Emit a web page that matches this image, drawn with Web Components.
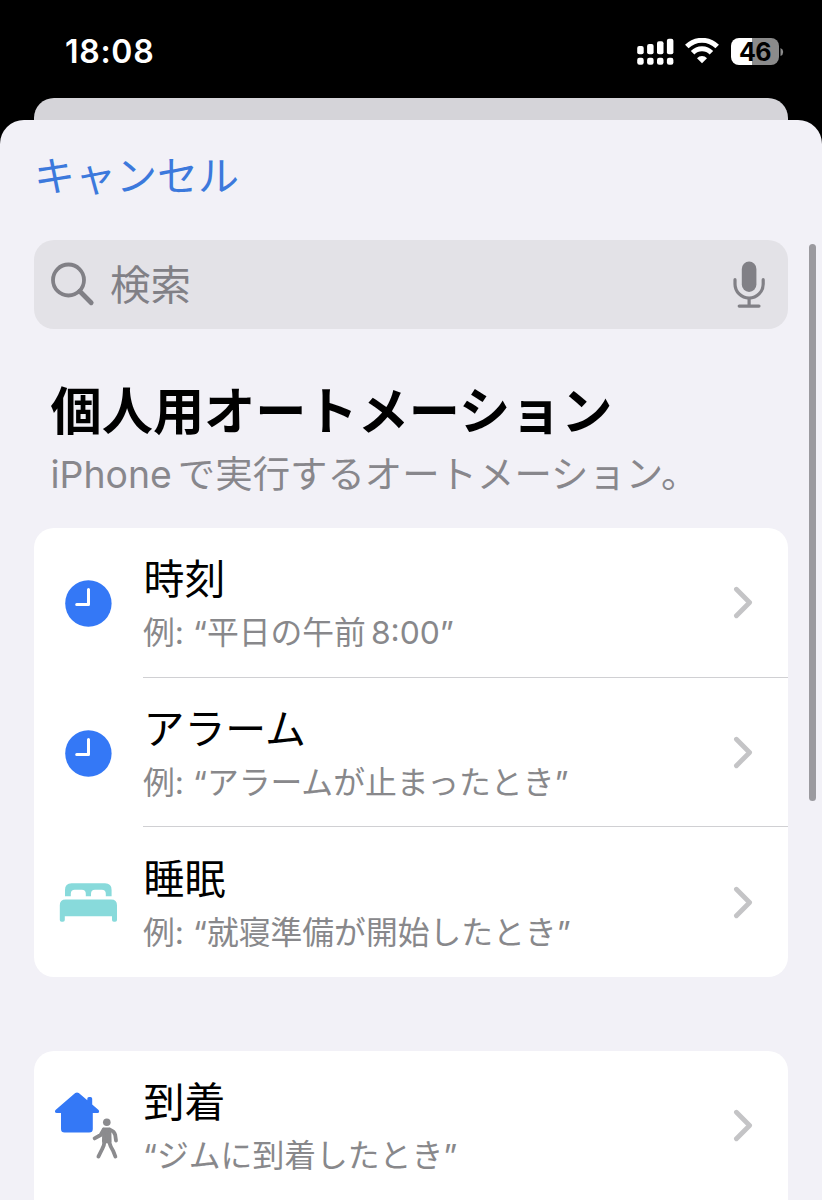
<!DOCTYPE html>
<html lang="ja">
<head>
<meta charset="utf-8">
<meta name="viewport" content="width=device-width, initial-scale=1">
<title>個人用オートメーション</title>
<style>
  body {
    margin: 0;
    height: 1200px;
    overflow: hidden;
    background: #000;
    font-family: Inter, "Noto Sans CJK JP", sans-serif;
  }
</style>
</head>
<body>
<status-bar time="18:08" battery="46"></status-bar>
<modal-sheet>
  <cancel-button>キャンセル</cancel-button>
  <search-field>検索</search-field>
  <section-heading>
    個人用オートメーション
    <span slot="detail"><span>iPhone</span><span style="margin-left: 6px">で実行するオートメーション。</span></span>
  </section-heading>
  <list-card>
    <trigger-row icon="clock">時刻<span slot="detail">例: “平日の午前<span style="margin-left: 5px">8:00</span>”</span></trigger-row>
    <trigger-row icon="clock">アラーム<span slot="detail">例: “アラームが止まったとき”</span></trigger-row>
    <trigger-row icon="bed">睡眠<span slot="detail">例: “就寝準備が開始したとき”</span></trigger-row>
  </list-card>
  <list-card style="padding-bottom: 60px">
    <trigger-row icon="arrive">到着<span slot="detail">“ジムに到着したとき”</span></trigger-row>
  </list-card>
</modal-sheet>

<script>
// All row icons share a 109x149 box, the width of the leading column.
const ICONS = {
  clock: `
    <circle cx="54.4" cy="75.5" r="23.2" fill="#3478f6"/>
    <path d="M54.5 61.5V76.4H42.7" fill="none" stroke="#fff" stroke-width="3" stroke-linecap="round" stroke-linejoin="round"/>`,
  bed: `
    <g fill="#88dadb" transform="translate(-0.2 0.7)">
      <path d="M31.2 68.6V62.2Q31.2 55.6 37.8 55.6H71.2Q77.8 55.6 77.8 62.2V68.6H72V66Q72 62 68 62H61.2Q57.2 62 57.2 66V68.6H52V66Q52 62 48 62H41Q37 62 37 66V68.6Z"/>
      <path d="M26 92.2V77.5Q26 71.7 31.8 71.7H77.4Q83.2 71.7 83.2 77.5V92.2Q83.2 94 81.4 94H80Q78.2 94 78.2 92.2V88.6H31V92.2Q31 94 29.2 94H27.8Q26 94 26 92.2Z"/>
    </g>`,
  arrive: `
    <path fill="#3478f6" d="M41.2 42Q43 40.8 44.8 42L53.3 49.3V47.7Q53.3 46 55 46H56.5Q58.2 46 58.2 47.7V53.4L64.3 58.7Q65.8 60 64.8 61.4Q64.3 62 63 62H58.8V78Q58.8 81.6 55.2 81.6H30.6Q27 81.6 27 78V62H22.8Q21.5 62 21.1 61.2Q20.4 59.8 21.8 58.7Z"/>
    <g fill="#8b8b8e" stroke="#8b8b8e" stroke-linecap="round" stroke-linejoin="round">
      <circle cx="72.8" cy="71.2" r="3.8" stroke="none"/>
      <path d="M70 78.4L75.5 78.4L75.8 90.5L69.8 90.5Z" stroke-width="3.6"/>
      <path fill="none" stroke-width="3.8" d="M69.6 78.6L66.6 84L60.6 87.4M76 78.8Q80.4 80.4 81.2 84L82 89.6M70.5 90.5Q70.2 94.5 68.2 98L64.4 105.6M75 90.5Q76.3 95.5 79.2 100L81.4 105.6"/>
    </g>`,
};

class StatusBar extends HTMLElement {
  constructor() {
    super();
    const shadow = this.attachShadow({ mode: 'open' });

    shadow.innerHTML = `
      <style>
        :host {
          display: flex;
          justify-content: space-between;
          align-items: center;
          height: 98px;
          padding: 0 38px 0 65px;
          box-sizing: border-box;
          color: #fff;
        }

        .time {
          font-size: 32px;
          font-weight: 600;
          line-height: 40px;
          letter-spacing: 0.7px;
          padding-top: 6px;
        }

        .status {
          display: flex;
          align-items: center;
          padding-top: 5px;
        }

        .signal { margin-right: 11px; }
        .wifi { margin-right: 12px; }

        .battery {
          width: 48px;
          height: 27px;
          border-radius: 8px;
          background: linear-gradient(90deg, #fff 21.5px, #8b8b8b 21.5px);
          color: #000;
          font-size: 25px;
          font-weight: 700;
          line-height: 28px;
          text-align: center;
          letter-spacing: -0.5px;
        }

        .cap { margin-left: 1px; }

        svg { display: block; }
      </style>
      <span class="time">${this.getAttribute('time')}</span>
      <div class="status">
        <svg class="signal" width="37" height="27" viewBox="0 0 37 27" fill="#fff">
          <rect x="0.2" y="8" width="6.5" height="8.2" rx="2"/>
          <rect x="10.1" y="6" width="6.5" height="10.2" rx="2"/>
          <rect x="20" y="3.2" width="6.5" height="13" rx="2"/>
          <rect x="29.9" y="0.7" width="6.5" height="15.5" rx="2"/>
          <rect x="0.2" y="19.8" width="6.5" height="7" rx="2.2"/>
          <rect x="10.1" y="19.8" width="6.5" height="7" rx="2.2"/>
          <rect x="20" y="19.8" width="6.5" height="7" rx="2.2"/>
          <rect x="29.9" y="19.8" width="6.5" height="7" rx="2.2"/>
        </svg>
        <svg class="wifi" width="34" height="27" viewBox="0 0 34 27">
          <path d="M1.8 8.6A21.5 21.5 0 0 1 32.2 8.6M7.6 14.8A13.2 13.2 0 0 1 26.4 14.8" fill="none" stroke="#fff" stroke-width="5"/>
          <path d="M12 20.2A7 7 0 0 1 22 20.2L17 25.2Z" fill="#fff"/>
        </svg>
        <div class="battery">${this.getAttribute('battery')}</div>
        <svg class="cap" width="4" height="10" viewBox="0 0 4 10"><path d="M0.5 1Q3.2 2 3.2 5T0.5 9Z" fill="#8b8b8b"/></svg>
      </div>
    `;
  }
}

class ModalSheet extends HTMLElement {
  constructor() {
    super();
    const shadow = this.attachShadow({ mode: 'open' });

    shadow.innerHTML = `
      <style>
        :host {
          display: block;
          position: relative;
        }

        .behind {
          height: 42px;
          margin: 0 34px -20.5px;
          border-radius: 20px 20px 0 0;
          background: #d5d4d9;
        }

        .sheet {
          position: relative;
          display: flex;
          flex-direction: column;
          height: 1081px;
          padding: 30.5px 34px 0;
          box-sizing: border-box;
          border-radius: 24px 24px 0 0;
          background: #f2f1f7;
          overflow: hidden;
        }

        ::slotted(*) { flex: none; }

        .scrollbar {
          position: absolute;
          top: 124px;
          right: 6.5px;
          width: 6.5px;
          height: 557.5px;
          border-radius: 4px;
          background: #9b9a9f;
        }
      </style>
      <div class="behind"></div>
      <div class="sheet">
        <slot></slot>
        <div class="scrollbar"></div>
      </div>
    `;
  }
}

class CancelButton extends HTMLElement {
  constructor() {
    super();
    const shadow = this.attachShadow({ mode: 'open' });

    shadow.innerHTML = `
      <style>
        :host {
          display: block;
          height: 90px;
          color: #3c79dc;
          font-size: 41px;
          line-height: 53px;
        }
      </style>
      <slot></slot>
    `;
  }
}

class SearchField extends HTMLElement {
  constructor() {
    super();
    const shadow = this.attachShadow({ mode: 'open' });

    shadow.innerHTML = `
      <style>
        :host {
          display: flex;
          align-items: center;
          height: 89px;
          padding: 0 22px 0 16px;
          box-sizing: border-box;
          border-radius: 20px;
          background: #e3e2e7;
          color: #818086;
          font-size: 40.5px;
          line-height: 52px;
        }

        .label {
          flex: 1;
          margin-left: 15px;
          padding-top: 2px;
        }
      </style>
      <svg width="45" height="46" viewBox="0 0 45 46" fill="none" stroke="#818086" stroke-linecap="round">
        <circle cx="18.5" cy="18" r="15.5" stroke-width="3.8"/>
        <path d="M29.8 29.3L41.2 40.7" stroke-width="4.8"/>
      </svg>
      <span class="label"><slot></slot></span>
      <svg width="34" height="48" viewBox="0 0 34 48" fill="none" stroke="#818086" stroke-width="3.2" stroke-linecap="round">
        <rect x="9.8" y="0.6" width="14.6" height="30.3" rx="7.3" fill="#818086" stroke="none"/>
        <path d="M3 18.7V23A14.1 14.1 0 0 0 31.2 23V18.7M17.1 38V45M7.2 45.1H27"/>
      </svg>
    `;
  }
}

class SectionHeading extends HTMLElement {
  constructor() {
    super();
    const shadow = this.attachShadow({ mode: 'open' });

    shadow.innerHTML = `
      <style>
        :host {
          display: block;
          height: 199px;
          padding: 52px 0 0 16.5px;
          box-sizing: border-box;
          white-space: nowrap;
        }

        h1 {
          margin: 0;
          font-size: 51.2px;
          font-weight: 700;
          line-height: 60px;
        }

        p {
          margin: 7px 0 0;
          color: #88878c;
          font-size: 37.4px;
          line-height: 54px;
        }
      </style>
      <h1><slot></slot></h1>
      <p><slot name="detail"></slot></p>
    `;
  }
}

class ListCard extends HTMLElement {
  constructor() {
    super();
    const shadow = this.attachShadow({ mode: 'open' });

    shadow.innerHTML = `
      <style>
        :host {
          display: block;
          margin-bottom: 74px;
          border-radius: 20px;
          background: #fff;
          overflow: hidden;
        }

        ::slotted(:last-child) { --separator: transparent; }
      </style>
      <slot></slot>
    `;
  }
}

class TriggerRow extends HTMLElement {
  constructor() {
    super();
    const shadow = this.attachShadow({ mode: 'open' });

    shadow.innerHTML = `
      <style>
        :host {
          display: flex;
          height: 149.67px;
        }

        svg {
          display: block;
          flex: none;
        }

        .content {
          flex: 1;
          display: flex;
          align-items: center;
          justify-content: space-between;
          padding-right: 34px;
          border-bottom: 1px solid var(--separator, #d0d0d3);
          white-space: nowrap;
        }

        .title {
          margin-left: 0.5px;
          padding-top: 3px;
          color: #000;
          font-size: 40.9px;
          line-height: 54px;
        }

        .detail {
          margin-top: 5px;
          color: #88888b;
          font-size: 31.8px;
          line-height: 44px;
        }
      </style>
      <svg width="109" height="149" viewBox="0 0 109 149">${ICONS[this.getAttribute('icon')]}</svg>
      <div class="content">
        <div>
          <div class="title"><slot></slot></div>
          <div class="detail"><slot name="detail"></slot></div>
        </div>
        <svg width="22" height="34" viewBox="0 0 22 34" fill="none" stroke="#c4c4c6" stroke-width="4.8" stroke-linecap="round" stroke-linejoin="round">
          <path d="M4.4 4.3L17.6 17.5L4.4 30.7"/>
        </svg>
      </div>
    `;
  }
}

customElements.define('status-bar', StatusBar);
customElements.define('modal-sheet', ModalSheet);
customElements.define('cancel-button', CancelButton);
customElements.define('search-field', SearchField);
customElements.define('section-heading', SectionHeading);
customElements.define('list-card', ListCard);
customElements.define('trigger-row', TriggerRow);
</script>
</body>
</html>
